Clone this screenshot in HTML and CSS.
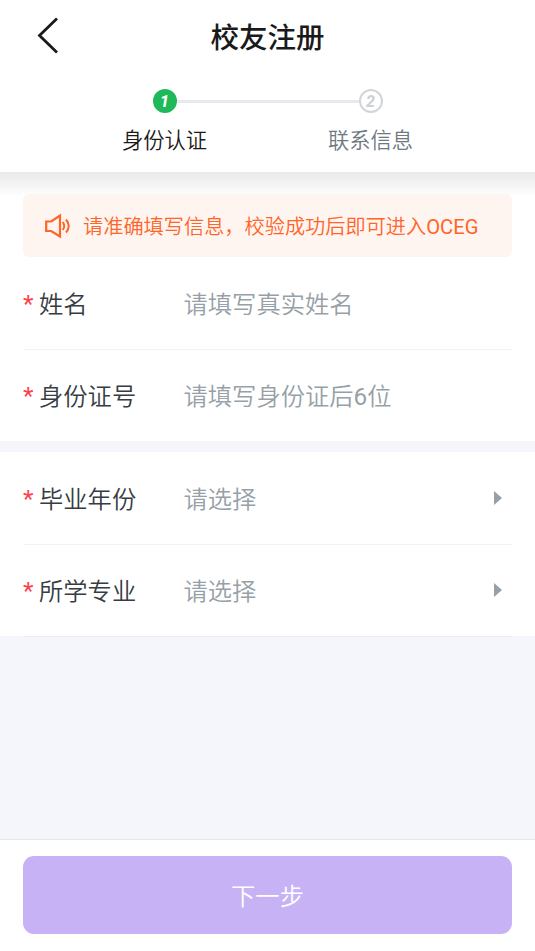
FILE: index.html
```html
<!DOCTYPE html>
<html lang="zh-CN">
<head>
<meta charset="utf-8">
<title>校友注册</title>
<link rel="stylesheet" href="styles.css">
</head>
<body>
<div class="page">
  <header class="head">
    <div class="bar">
      <svg class="back" width="24" height="40" viewBox="0 0 24 40"><path d="M21 2.500 3.500 19.500 21 36.500" fill="none" stroke="#1a1a1a" stroke-width="2.800"/></svg>
      <h1 class="title">校友注册</h1>
    </div>
    <div class="steps">
      <div class="step active"><span class="num">1</span><span class="name">身份认证</span></div>
      <div class="line"></div>
      <div class="step"><span class="num">2</span><span class="name">联系信息</span></div>
    </div>
  </header>
  <main class="main">
    <section class="group first">
      <div class="notice">
        <svg width="26" height="26" viewBox="0 0 26 26" fill="none" stroke="#ff6428" stroke-width="2.200"><path d="M1.200 8.500h5L15 2.500v21L6.200 18h-5z"/><path d="M17.800 9q2.800 4 0 8M21 6.500q5.500 6.500 0 13" stroke-width="2"/></svg>
        <span>请准确填写信息，校验成功后即可进入<span class="latin">OCEG</span></span>
      </div>
      <div class="row"><i>*</i><label>姓名</label><span class="hint">请填写真实姓名</span></div>
      <div class="row last"><i>*</i><label>身份证号</label><span class="hint">请填写身份证后<span class="latin">6</span>位</span></div>
    </section>
    <section class="group">
      <div class="row"><i>*</i><label>毕业年份</label><span class="hint">请选择</span><b class="arrow"></b></div>
      <div class="row"><i>*</i><label>所学专业</label><span class="hint">请选择</span><b class="arrow"></b></div>
    </section>
  </main>
  <footer class="foot"><button class="next">下一步</button></footer>
</div>
</body>
</html>
```
FILE: styles.css
```css
* { box-sizing: border-box; }
body { margin: 0; font-family: Roboto, "Noto Sans CJK SC", sans-serif; font-weight: 350; }
.page { height: 951px; display: flex; flex-direction: column; background: #f5f6fb; overflow: hidden; }
.head { height: 172px; background: #fff; flex: none; }
.bar { height: 72px; display: grid; grid-template-columns: 60px 1fr 60px; align-items: center; }
.back { margin-left: 36px; }
.title { margin: 0; padding-top: 5px; text-align: center; font-size: 28.500px; font-weight: 500; line-height: 40px; color: #1a1a1a; }
.steps { display: flex; justify-content: center; padding-top: 17px; }
.step { width: 86px; display: flex; flex-direction: column; align-items: center; color: #6f7781; }
.num { width: 24px; height: 24px; border: 2px solid #d2d6da; border-radius: 50%; font-size: 16px; font-weight: 800; font-style: italic; line-height: 21px; text-align: center; color: #cdd1d5; }
.name { margin-top: 12px; font-size: 21.300px; line-height: 32px; white-space: nowrap; }
.active { color: #1a1a1a; }
.active .num { color: #fff; background: #1fb959; border-color: #1fb959; }
.line { width: 182px; height: 3px; margin: 11px -31px 0; background: #e6eaee; }
.main { flex: 1; }
.group { background: #fff; padding: 0 23px; margin-bottom: 11px; }
.first { height: 269px; padding-top: 22px; background: linear-gradient(#e9e9e9, #fff 25px); }
.notice { height: 63px; border-radius: 6px; background: #fff5f0; color: #ff6428; display: flex; align-items: center; padding-left: 22px; gap: 12px; font-size: 20.200px; white-space: nowrap; }
.latin { font-weight: 400; }
.row { height: 92px; display: flex; align-items: center; font-size: 24.300px; color: #363c42; box-shadow: 0 1px #f2f3f4; }
.row i { width: 16px; font-style: normal; font-weight: 400; color: #ff414b; }
.row label { width: 144.500px; padding-bottom: 2px; }
.hint { color: #979fa7; flex: 1; padding-bottom: 2px; }
.last { box-shadow: none; }
.row:last-child:not(.last) { box-shadow: 0 1px #ebedf0; }
.arrow { width: 0; height: 0; border: solid transparent; border-width: 7px 0 7px 8px; border-left-color: #979fa7; margin-right: 10px; }
.foot { height: 112px; border-top: 1px solid #e3e7e8; background: #fff; padding: 16px 23px; }
.next { display: block; width: 100%; height: 78px; border: 0; border-radius: 11px; background: #c8b2f6; color: #fff; font: inherit; font-size: 24.300px; padding: 0 0 2px; }
```
